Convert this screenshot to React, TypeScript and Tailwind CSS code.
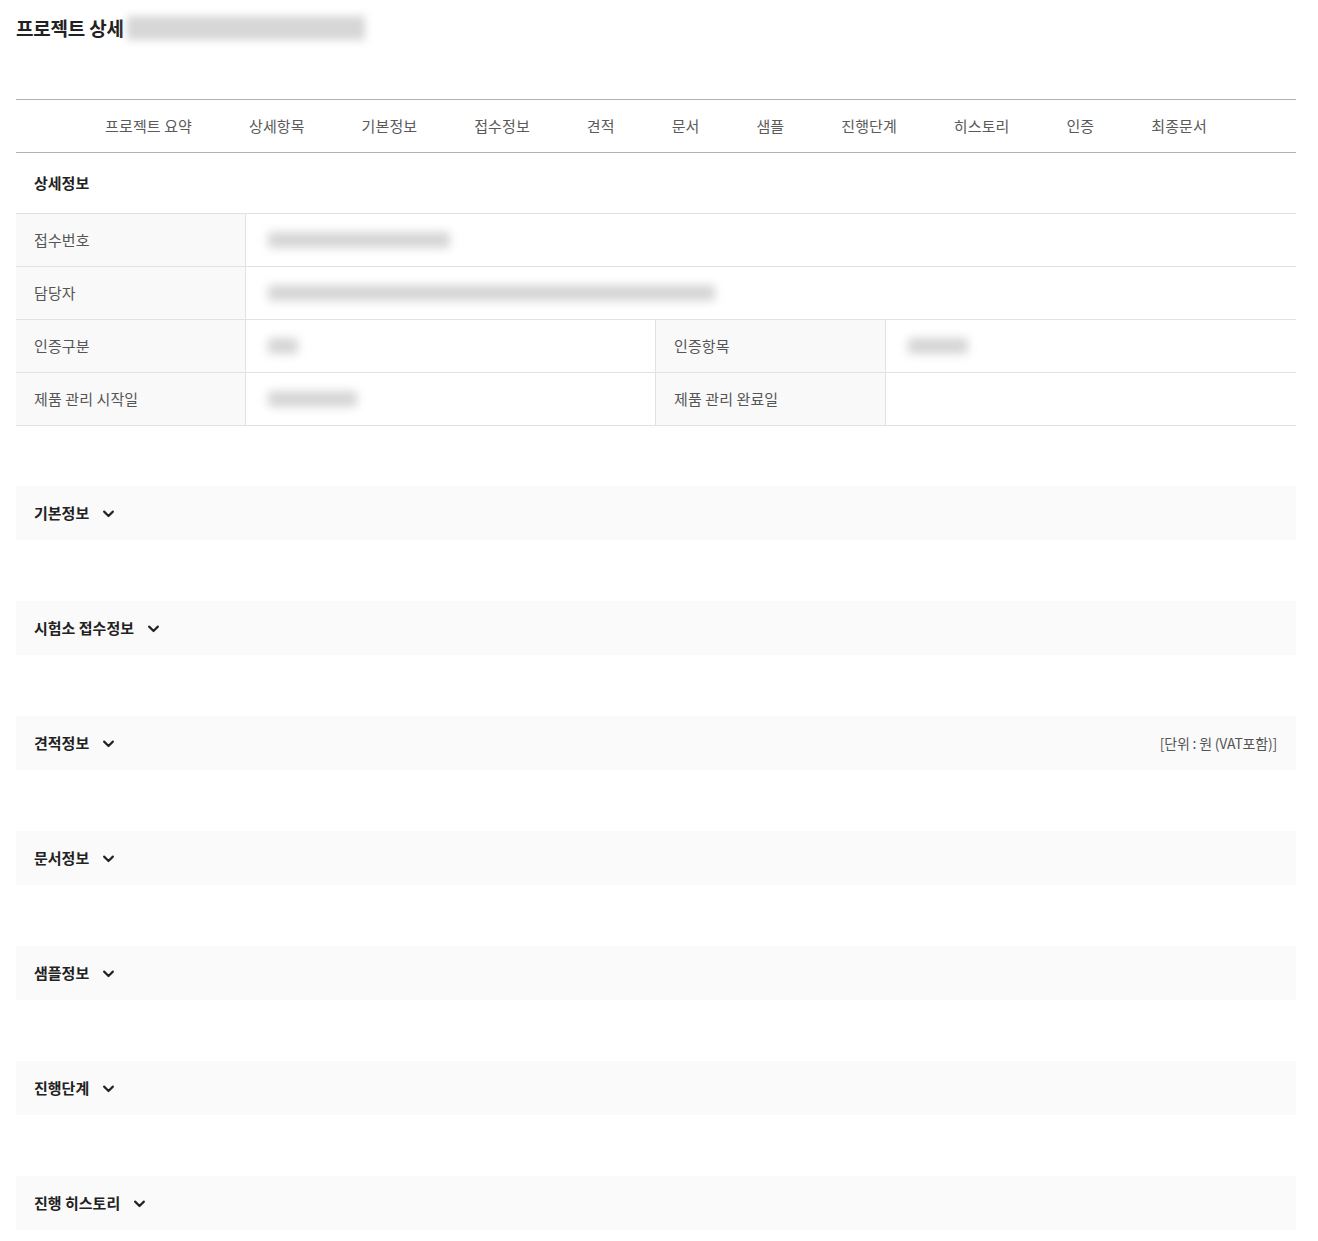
import React from "react";

const tabs = ["프로젝트 요약", "상세항목", "기본정보", "접수정보", "견적", "문서", "샘플", "진행단계", "히스토리", "인증", "최종문서"];

const sections: { title: string; right?: string }[] = [
  { title: "기본정보" },
  { title: "시험소 접수정보" },
  { title: "견적정보", right: "[단위 : 원 (VAT포함)]" },
  { title: "문서정보" },
  { title: "샘플정보" },
  { title: "진행단계" },
  { title: "진행 히스토리" },
];

function Blur({ w }: { w: string }) {
  return <div className={`${w} h-[16px] rounded-sm bg-[#c4c4c4] blur-[5px] opacity-70`} />;
}

function Chevron() {
  return (
    <svg width="15" height="15" viewBox="0 0 24 24" fill="none" stroke="#222" strokeWidth="3.4" strokeLinecap="round" strokeLinejoin="round">
      <path d="M5 9l7 7 7-7" />
    </svg>
  );
}

export default function App() {
  const font = { fontFamily: '"Noto Sans CJK KR", "Noto Sans", sans-serif' };
  return (
    <div className="min-h-[1241px] bg-white" style={font}>
      <div className="ml-4 w-[1280px] text-[#222]">
        <div className="flex h-[55px] items-center gap-[3px] pt-[1px]">
          <h1 className="text-[19px] font-bold tracking-[-0.2px] text-[#222]">프로젝트 상세</h1>
          <div className="h-[24px] w-[238px] bg-[#d6d6d6] blur-[4px]" />
        </div>

        <nav className="mt-[44px] flex h-[54px] items-center justify-center border-y border-[#b2b2b2]">
          {tabs.map((t) => (
            <div key={t} className="px-[28.5px] text-[15px] tracking-[0.1px] text-[#5a5a5a]">
              {t}
            </div>
          ))}
        </nav>

        <div className="flex h-[60px] items-center pl-[18px] text-[15px] font-bold text-[#222]">상세정보</div>

        <div className="border-t border-[#e2e2e2] text-[15px] tracking-[0.1px] text-[#555]">
          <div className="flex h-[53px] border-b border-[#e2e2e2]">
            <div className="flex w-[230px] items-center border-r border-[#e2e2e2] bg-[#f9f9f9] pl-[18px]">접수번호</div>
            <div className="flex flex-1 items-center pl-[22px]"><Blur w="w-[182px]" /></div>
          </div>
          <div className="flex h-[53px] border-b border-[#e2e2e2]">
            <div className="flex w-[230px] items-center border-r border-[#e2e2e2] bg-[#f9f9f9] pl-[18px]">담당자</div>
            <div className="flex flex-1 items-center pl-[22px]"><Blur w="w-[447px]" /></div>
          </div>
          <div className="flex h-[53px] border-b border-[#e2e2e2]">
            <div className="flex w-[230px] items-center border-r border-[#e2e2e2] bg-[#f9f9f9] pl-[18px]">인증구분</div>
            <div className="flex w-[410px] items-center border-r border-[#e2e2e2] pl-[22px]"><Blur w="w-[30px]" /></div>
            <div className="flex w-[230px] items-center border-r border-[#e2e2e2] bg-[#f9f9f9] pl-[18px]">인증항목</div>
            <div className="flex flex-1 items-center pl-[22px]"><Blur w="w-[60px]" /></div>
          </div>
          <div className="flex h-[53px] border-b border-[#e2e2e2]">
            <div className="flex w-[230px] items-center border-r border-[#e2e2e2] bg-[#f9f9f9] pl-[18px]">제품 관리 시작일</div>
            <div className="flex w-[410px] items-center border-r border-[#e2e2e2] pl-[22px]"><Blur w="w-[89px]" /></div>
            <div className="flex w-[230px] items-center border-r border-[#e2e2e2] bg-[#f9f9f9] pl-[18px]">제품 관리 완료일</div>
            <div className="flex flex-1 items-center pl-[22px]" />
          </div>
        </div>

        <div className="mt-[60px] flex flex-col gap-[61px]">
          {sections.map((s) => (
            <div key={s.title} className="flex h-[54px] items-center justify-between bg-[#fafafa] pl-[18px] pr-[19px]">
              <div className="flex items-center gap-[12px]">
                <span className="text-[15px] font-bold text-[#222]">{s.title}</span>
                <Chevron />
              </div>
              {s.right && <span className="text-[14px] tracking-[-0.2px] text-[#555]">{s.right}</span>}
            </div>
          ))}
        </div>
      </div>
    </div>
  );
}
